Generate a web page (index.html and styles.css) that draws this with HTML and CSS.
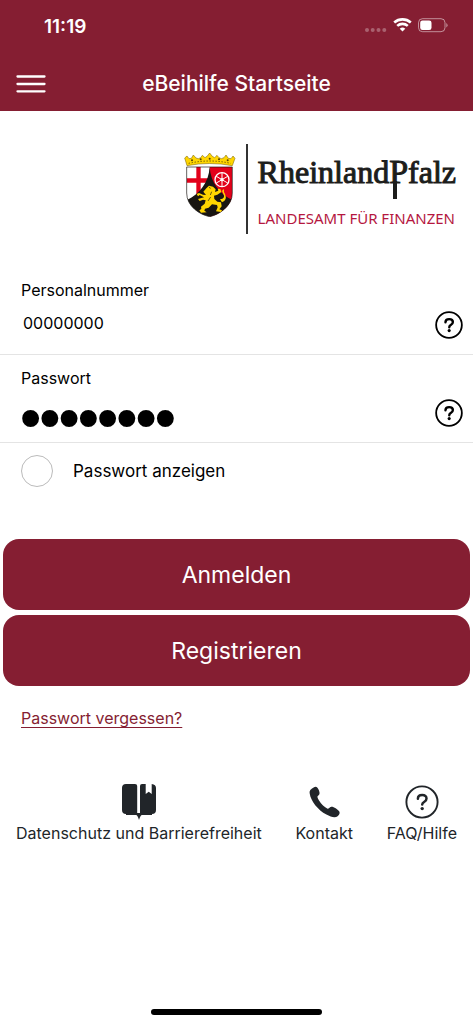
FILE: index.html
```html
<!DOCTYPE html>
<html lang="de">
<head>
<meta charset="utf-8">
<meta name="viewport" content="width=device-width, initial-scale=1">
<title>eBeihilfe Startseite</title>
<link rel="stylesheet" href="styles.css">
</head>
<body>
<header class="header">
  <div class="status">
    <span class="clock">11:19</span>
    <svg class="status-icons" width="84" height="20" viewBox="0 0 84 20" aria-hidden="true">
      <g fill="#fff" fill-opacity=".3"><circle cx="3" cy="13" r="2"/><circle cx="8.700" cy="13" r="2"/><circle cx="14.500" cy="13" r="2"/><circle cx="20.300" cy="13" r="2"/></g>
      <g fill="none" stroke="#fff" stroke-width="2.600"><path d="M30.200 5.500a12.500 12.500 0 0 1 16.600 0"/><path d="M33.200 8.900a8 8 0 0 1 10.600 0"/></g>
      <path d="M35.700 11.700a4.200 4.200 0 0 1 5.600 0l-2.800 2.900z" fill="#fff"/>
      <rect x="54.500" y="1.700" width="26.500" height="13" rx="4" fill="none" stroke="#fff" stroke-opacity=".5"/>
      <rect x="56.200" y="3.400" width="11.300" height="9.600" rx="2.300" fill="#fff"/>
      <path d="M82.300 6v4.500q1.300-.7 1.300-2.200t-1.300-2.300" fill="#fff" fill-opacity=".5"/>
    </svg>
  </div>
  <div class="navbar">
    <button class="menu" aria-label="Menü"><svg width="30" height="20" viewBox="0 0 30 20"><path d="M1.500 2.500h27M1.500 10h27M1.500 17.300h27" stroke="#fff" stroke-width="2.300" stroke-linecap="round"/></svg></button>
    <h1 class="title">eBeihilfe Startseite</h1>
  </div>
</header>
<main>
  <div class="brand">
    <svg class="crest" width="54" height="64" viewBox="0 0 162 192" aria-hidden="true">
      <defs><clipPath id="shield"><path d="M11 42H148V120C148 160 108 185 80 191C50 185 11 160 11 120Z"/></clipPath></defs>
      <g clip-path="url(#shield)">
        <path fill="#fff" d="M0 40h80v152H0z"/><path fill="#e2001a" d="M80 40h80v152H80z"/>
        <path fill="#e2001a" d="M40 40h13v120H40zM8 76h72v13H8z"/>
        <path fill="#181512" d="M80 42C77 90 50 122 12 141L30 192H130L148 141C110 122 83 90 80 42Z"/>
      </g>
      <path d="M11 42H148V120C148 160 108 185 80 191C50 185 11 160 11 120Z" fill="none" stroke="#181512" stroke-width="2"/>
      <g fill="none" stroke="#fff" stroke-width="4"><circle cx="117" cy="80" r="21"/><path stroke-width="3" d="M117 60v40M100 70l34 20M100 90l34-20"/></g><circle cx="117" cy="80" r="5" fill="#fff"/>
      <path fill="#ffd500" stroke="#6b5700" stroke-width="1.500" d="M12 38L5 15l7-6 6 8 7-1 6-10 8 9 7 2 7-3 5-7 8 7 6-4 8-10 8 10 7 4 7-7 6 7 7 3 8-3 6-8 7 10 8 1 6-8 6 7-8 22Q80 25 12 38Z"/>
      <path d="M17 31Q80 17 143 31" fill="none" stroke="#6b5700" stroke-width="3" stroke-dasharray="4 5"/>
      <g fill="#564500"><circle cx="27" cy="22" r="3"/><circle cx="53" cy="19" r="3"/><circle cx="80" cy="17" r="3"/><circle cx="108" cy="19" r="3"/><circle cx="134" cy="22" r="3"/></g>
      <path fill="#ffd500" d="M70 106l8-8 12 3 8 8-2 8 10-4-2-6 8 1 3 9-12 8-10 3 1 10 9 8 11 2 2 12-7 9 8 3-3 5-15-2 5-12-2-7-15-2-10 10-11 3-2 6 7 5-17 1-5-7 6-4-1-7 11-9 3-10-8-2-10 4-5-6 8-2 10-3-13-7-5 4-4-7 7-3 12 5 9 1-8-10z"/>
      <path d="M111 139q18-2 9-19-6-8 3-11-2 7 3 14 8 18-9 25" fill="#ffd500"/>
      <path d="M78 103l5 3M86 116l-4 10M83 132l-8 12" stroke="#181512" stroke-width="2"/>
    </svg>
    <div class="wordmark">
      <div class="state"><span>Rheinland</span><span class="state-p">P</span><span>falz</span></div>
      <div class="office">LANDESAMT FÜR FINANZEN</div>
    </div>
  </div>
  <form class="form">
    <div class="field">
      <div class="entry"><label for="pn">Personalnummer</label><input id="pn" class="input" type="text" value="00000000"></div>
      <button type="button" class="help" aria-label="Hilfe zur Personalnummer"><svg width="28" height="28" viewBox="0 0 34 34"><circle cx="17" cy="17" r="15.600" fill="none" stroke="currentColor" stroke-width="2.200"/><path d="M12.700 13.800q0-4 4.500-4t4.500 3.600q0 2-2.200 3.300-2.200 1.300-2.200 3" fill="none" stroke="currentColor" stroke-width="2.900" stroke-linecap="round"/><circle cx="17.200" cy="23.800" r="1.900" fill="currentColor"/></svg></button>
    </div>
    <div class="field">
      <div class="entry"><label for="pw">Passwort</label><input id="pw" class="input secret" type="password" value="00000000"></div>
      <button type="button" class="help" aria-label="Hilfe zum Passwort"><svg width="28" height="28" viewBox="0 0 34 34"><circle cx="17" cy="17" r="15.600" fill="none" stroke="currentColor" stroke-width="2.200"/><path d="M12.700 13.800q0-4 4.500-4t4.500 3.600q0 2-2.200 3.300-2.200 1.300-2.200 3" fill="none" stroke="currentColor" stroke-width="2.900" stroke-linecap="round"/><circle cx="17.200" cy="23.800" r="1.900" fill="currentColor"/></svg></button>
    </div>
    <label class="show"><input type="checkbox" class="check">Passwort anzeigen</label>
    <div class="actions"><button type="button" class="action">Anmelden</button><button type="button" class="action">Registrieren</button></div>
  </form>
  <a class="forgot" href="#">Passwort vergessen?</a>
  <nav class="links">
    <a href="#"><svg width="36" height="36" viewBox="0 0 36 36" fill="currentColor"><path d="M5 0h9q2.200 0 2.200 2v28H5q-4 0-4-4V4q0-4 4-4M19 2q0-2 2-2h3.700v10l3-2.300 3 2.300V0Q35 .5 35 4v22q0 4-4 4H19z"/><path d="M5 29h26v2H21q-1.500 0-3 5-1.500-5-3-5H5z"/></svg><span>Datenschutz und Barrierefreiheit</span></a>
    <a href="#"><svg width="36" height="36" viewBox="-1 0 36 36" fill="currentColor"><path d="M7 3.300c2-1.400 3.800 0 5 3.200 1.100 2.800.6 4.400-1.200 5.600-.8.600-.3 2 1.200 4.300 2.500 3.700 5.400 6.700 8.600 8.300 1 .5 1.700-1.700 3.600-2 2.500-.3 6.300 2.500 7.800 4.300 1.300 1.700.5 3.600-1.400 5.200-2.500 2-6.700.8-11.200-1.700C10.800 25.800 3.800 17 2.700 9.400 2.300 6.300 4 5.100 7 3.300"/></svg><span>Kontakt</span></a>
    <a href="#"><svg width="34" height="36" viewBox="0 -1 34 36"><circle cx="17" cy="17" r="15.600" fill="none" stroke="currentColor" stroke-width="1.900"/><path d="M12.900 13.800q0-3.700 4.300-3.700t4.300 3.300q0 2-2.100 3.300-2.200 1.300-2.200 2.800" fill="none" stroke="currentColor" stroke-width="2.500" stroke-linecap="round"/><circle cx="17.200" cy="23.600" r="1.700" fill="currentColor"/></svg><span>FAQ/Hilfe</span></a>
  </nav>
</main>
<footer class="home"><div class="home-bar"></div></footer>
</body>
</html>
```
FILE: styles.css
```css
* { box-sizing: border-box; }
body { margin: 0; min-height: 100vh; display: flex; flex-direction: column; background: #fff; color: #000; font: 16px/20px Inter, "Liberation Sans", sans-serif; }
button { border: 0; padding: 0; background: none; color: inherit; font: inherit; }
svg { display: block; flex: none; }
.header { background: #851e32; color: #fff; padding-bottom: 5px; }
.status { display: flex; justify-content: space-between; align-items: center; height: 62px; padding: 0 25px 8px 44px; }
.clock { font-size: 19px; font-weight: 600; }
.navbar { display: grid; grid-template-columns: 48px 1fr 48px; align-items: center; height: 44px; padding: 0 16px; }
.menu { width: 30px; }
.title { margin: 0; text-align: center; font-size: 21px; line-height: 28px; font-weight: 500; }
.brand { display: flex; justify-content: flex-end; padding: 33px 17px 0; }
.crest { margin: 9px 9px 0 0; }
.wordmark { border-left: 2px solid #333; padding: 4px 0 4px 10px; height: 90px; }
.state { display: flex; align-items: baseline; height: 60px; color: #1d1d1b; font: 32px/48px "Liberation Serif", serif; -webkit-text-stroke: 1px #1d1d1b; }
.state-p { position: relative; font-size: 34px; }
.state-p::after { content: ""; position: absolute; left: 4px; bottom: -3px; width: 4px; height: 18px; background: #1d1d1b; }
.office { color: #b5173f; font: 15px/20px "Noto Sans", sans-serif; white-space: nowrap; }
.form { padding-top: 34px; }
.field { display: flex; justify-content: space-between; align-items: center; height: 88px; padding: 0 10px 0 21px; border-bottom: 1px solid #e4e4e4; }
.field:first-child { height: 87px; }
.entry { flex: 1; display: flex; flex-direction: column; align-self: stretch; padding-top: 13px; }
.field:first-child .entry { padding-top: 12px; }
.input { width: 100%; height: 24px; border: 0; padding: 0 2px; margin-top: 11px; outline: 0; background: none; color: #000; font: 16px/24px Inter, sans-serif; }
.input.secret { height: 40px; margin-top: 10px; padding: 0; font: 55px/40px "Liberation Sans", sans-serif; -webkit-text-stroke: 2px #000; }
.help { margin-top: 28px; }
.show { display: flex; align-items: center; gap: 20px; height: 56px; padding-left: 21px; font-size: 17px; }
.check { appearance: none; width: 32px; height: 32px; margin: 0; border: 1px solid #bbb; border-radius: 50%; }
.actions { display: grid; gap: 5px; padding: 40px 3px 0; }
.action { height: 71px; border-radius: 16px; background: #851e32; color: #fff; font-size: 23px; line-height: 32px; }
.forgot { display: inline-block; margin: 22px 21px 0; color: #851e32; text-underline-offset: 3px; }
.links { display: flex; justify-content: space-between; margin-top: 56px; padding: 0 16px; }
.links a { display: flex; flex-direction: column; align-items: center; gap: 3px; color: #212529; text-decoration: none; white-space: nowrap; }
.home { margin-top: auto; padding: 8px 0 9px; }
.home-bar { width: 36%; height: 6px; margin: 0 auto; border-radius: 3px; background: #000; }
```
